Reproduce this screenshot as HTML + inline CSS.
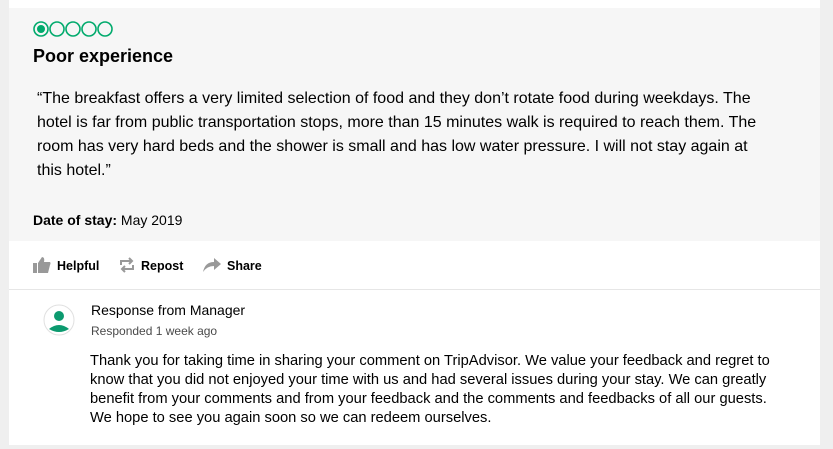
<html><head><style>
body{margin:0;width:833px;height:449px;background:#efefef;font-family:"Liberation Sans",Arial,sans-serif;position:relative;overflow:hidden}
.card{position:absolute;left:9px;top:0;width:811px;height:445px;background:#fff}
.grey{position:absolute;left:0;top:8px;width:811px;height:233px;background:#f6f6f6}
.abs{position:absolute;white-space:nowrap}
</style></head><body>
<div class="card">
<div class="grey"></div>
<svg class="abs" style="left:24px;top:20px" width="82" height="18">
<g fill="none" stroke="#00aa6c" stroke-width="1.6">
<circle cx="8" cy="9" r="7"/><circle cx="24" cy="9" r="7"/><circle cx="40" cy="9" r="7"/><circle cx="56" cy="9" r="7"/><circle cx="72" cy="9" r="7"/></g>
<circle cx="8" cy="9" r="4" fill="#00aa6c"/></svg>
<div class="abs" style="left:24px;top:46px;font-size:18px;font-weight:bold;color:#000">Poor experience</div>
<div class="abs" style="left:28px;top:87px;font-size:16px;line-height:24px;color:#000;white-space:normal;width:732px">“The breakfast offers a very limited selection of food and they don’t rotate food during weekdays. The hotel is far from public transportation stops, more than 15 minutes walk is required to reach them. The room has very hard beds and the shower is small and has low water pressure. I will not stay again at this hotel.”</div>
<div class="abs" style="left:24px;top:212px;font-size:14px;color:#000"><b>Date of stay:</b> May 2019</div>
<svg class="abs" style="left:24px;top:257px" width="18" height="16"><rect x="0" y="6" width="4" height="10" fill="#999"/><path d="M5 6 L9 0 Q12 0 11 5 L17 5 Q18 6 17 8 L15 16 L5 16Z" fill="#999"/></svg>
<div class="abs" style="left:48px;top:259px;font-size:12.5px;font-weight:bold;color:#000">Helpful</div>
<svg class="abs" style="left:110px;top:257px" width="16" height="16" fill="none" stroke="#999" stroke-width="2"><path d="M2 8 V4 H12"/><path d="M10 1 L13 4 L10 7" /><path d="M14 8 V12 H4"/><path d="M6 9 L3 12 L6 15"/></svg>
<div class="abs" style="left:132px;top:259px;font-size:12.5px;font-weight:bold;color:#000">Repost</div>
<svg class="abs" style="left:194px;top:257px" width="18" height="16"><path d="M11 1 L18 7 L11 13 V9 Q4 9 0 15 Q2 5 11 5Z" fill="#999"/></svg>
<div class="abs" style="left:218px;top:259px;font-size:12.5px;font-weight:bold;color:#000">Share</div>
<div style="position:absolute;left:0;top:289px;width:811px;height:1px;background:#e6e6e6"></div>
<svg class="abs" style="left:34px;top:304px" width="32" height="32"><circle cx="16" cy="16" r="15" fill="#fff" stroke="#e0e0e0"/><circle cx="16" cy="12" r="5" fill="#0c9a6f"/><path d="M6 25 Q16 17 26 25 Q16 31 6 25Z" fill="#0c9a6f"/></svg>
<div class="abs" style="left:82px;top:302px;font-size:14px;color:#000">Response from Manager</div>
<div class="abs" style="left:82px;top:324px;font-size:12px;color:#4a4a4a">Responded 1 week ago</div>
<div class="abs" style="left:81px;top:352px;font-size:14.7px;line-height:19px;color:#000;white-space:normal;width:700px">Thank you for taking time in sharing your comment on TripAdvisor. We value your feedback and regret to know that you did not enjoyed your time with us and had several issues during your stay. We can greatly benefit from your comments and from your feedback and the comments and feedbacks of all our guests. We hope to see you again soon so we can redeem ourselves.</div>
</div>
</body></html>
